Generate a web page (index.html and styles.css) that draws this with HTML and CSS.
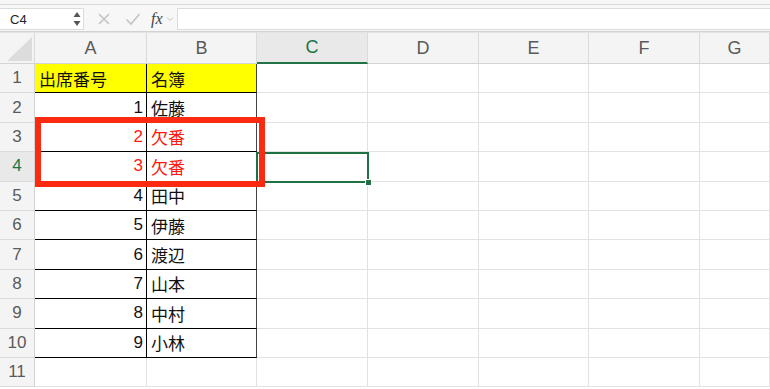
FILE: index.html
```html
<!DOCTYPE html>
<html lang="ja">
<head>
    <meta charset="UTF-8">
    <title>出席番号</title>
    <link rel="stylesheet" href="styles.css">
</head>
<body>
    <div class="top-strip"></div>

    <div class="formula-bar">
        <div class="name-box">
            <span>C4</span>
            <svg class="spinner" width="8" height="16" viewBox="0 0 8 16">
                <path d="M4 1 L7.5 6 L0.5 6 Z" fill="#555"/>
                <path d="M4 15 L7.5 10 L0.5 10 Z" fill="#555"/>
            </svg>
        </div>
        <div class="bar-icons">
            <svg width="14" height="14" viewBox="0 0 14 14">
                <path d="M2 2 L12 12 M12 2 L2 12" stroke="#c4c4c4" stroke-width="1.6" fill="none"/>
            </svg>
            <svg width="16" height="14" viewBox="0 0 16 14">
                <path d="M1.5 7.5 L6 12 L14.5 2" stroke="#c4c4c4" stroke-width="1.6" fill="none"/>
            </svg>
            <span class="fx">fx</span>
            <svg width="8" height="8" viewBox="0 0 8 8">
                <path d="M1 2.5 L4 5.5 L7 2.5" stroke="#c8c8c8" stroke-width="1" fill="none"/>
            </svg>
        </div>
        <div class="formula-input"></div>
    </div>

    <div class="sheet">
        <div class="row head">
            <div class="corner"><div class="tri"></div></div>
            <div class="col-h">A</div>
            <div class="col-h">B</div>
            <div class="col-h active">C</div>
            <div class="col-h">D</div>
            <div class="col-h">E</div>
            <div class="col-h">F</div>
            <div class="col-h">G</div>
        </div>

        <div class="row">
            <div class="row-h">1</div>
            <div class="cell a t yellow">出席番号</div>
            <div class="cell b t yellow">名簿</div>
            <div class="cell"></div><div class="cell"></div><div class="cell"></div><div class="cell"></div><div class="cell"></div>
        </div>
        <div class="row">
            <div class="row-h">2</div>
            <div class="cell a t num">1</div>
            <div class="cell b t">佐藤</div>
            <div class="cell"></div><div class="cell"></div><div class="cell"></div><div class="cell"></div><div class="cell"></div>
        </div>
        <div class="row">
            <div class="row-h">3</div>
            <div class="cell a t num red">2</div>
            <div class="cell b t red">欠番</div>
            <div class="cell"></div><div class="cell"></div><div class="cell"></div><div class="cell"></div><div class="cell"></div>
        </div>
        <div class="row">
            <div class="row-h active">4</div>
            <div class="cell a t num red">3</div>
            <div class="cell b t red">欠番</div>
            <div class="cell"></div><div class="cell"></div><div class="cell"></div><div class="cell"></div><div class="cell"></div>
        </div>
        <div class="row">
            <div class="row-h">5</div>
            <div class="cell a t num">4</div>
            <div class="cell b t">田中</div>
            <div class="cell"></div><div class="cell"></div><div class="cell"></div><div class="cell"></div><div class="cell"></div>
        </div>
        <div class="row">
            <div class="row-h">6</div>
            <div class="cell a t num">5</div>
            <div class="cell b t">伊藤</div>
            <div class="cell"></div><div class="cell"></div><div class="cell"></div><div class="cell"></div><div class="cell"></div>
        </div>
        <div class="row">
            <div class="row-h">7</div>
            <div class="cell a t num">6</div>
            <div class="cell b t">渡辺</div>
            <div class="cell"></div><div class="cell"></div><div class="cell"></div><div class="cell"></div><div class="cell"></div>
        </div>
        <div class="row">
            <div class="row-h">8</div>
            <div class="cell a t num">7</div>
            <div class="cell b t">山本</div>
            <div class="cell"></div><div class="cell"></div><div class="cell"></div><div class="cell"></div><div class="cell"></div>
        </div>
        <div class="row">
            <div class="row-h">9</div>
            <div class="cell a t num">8</div>
            <div class="cell b t">中村</div>
            <div class="cell"></div><div class="cell"></div><div class="cell"></div><div class="cell"></div><div class="cell"></div>
        </div>
        <div class="row">
            <div class="row-h">10</div>
            <div class="cell a t num">9</div>
            <div class="cell b t">小林</div>
            <div class="cell"></div><div class="cell"></div><div class="cell"></div><div class="cell"></div><div class="cell"></div>
        </div>
        <div class="row">
            <div class="row-h">11</div>
            <div class="cell"></div><div class="cell"></div>
            <div class="cell"></div><div class="cell"></div><div class="cell"></div><div class="cell"></div><div class="cell"></div>
        </div>

        <!-- 選択セル C4 -->
        <div class="selection"><div class="handle"></div></div>
        <!-- 欠番の強調枠 -->
        <div class="red-box"></div>
    </div>
</body>
</html>
```

FILE: styles.css
```css
* {
    margin: 0;
    padding: 0;
    box-sizing: border-box;
}

body {
    width: 770px;
    height: 389px;
    overflow: hidden;
    background: #fff;
    font-family: 'Liberation Sans', 'Noto Sans CJK JP', sans-serif;
    color: #111;
}

.top-strip {
    height: 5px;
    background: #f6f6f6;
    border-bottom: 1px solid #d9d9d9;
}

/* 数式バー */
.formula-bar {
    height: 27px;
    display: flex;
    align-items: center;
    background: #f7f7f7;
    border-bottom: 1px solid #d2d2d2;
}

.name-box {
    width: 84px;
    height: 22px;
    margin-top: 2px;
    display: flex;
    align-items: center;
    justify-content: space-between;
    padding: 0 2px 0 10px;
    background: #fff;
    border: 1px solid #dcdcdc;
    border-left: none;
    font-size: 13px;
    color: #222;
}

.spinner {
    display: block;
}

.bar-icons {
    display: flex;
    align-items: center;
    width: 93px;
    height: 22px;
    margin-top: 2px;
}

.bar-icons svg:nth-child(1) {
    margin-left: 13px;
}

.bar-icons svg:nth-child(2) {
    margin-left: 14px;
}

.fx {
    margin-left: 10px;
    font-family: 'Liberation Serif', serif;
    font-style: italic;
    font-size: 16px;
    color: #444;
}

.bar-icons svg:nth-child(4) {
    margin-left: 3px;
}

.formula-input {
    flex: 1;
    height: 22px;
    margin-top: 2px;
    background: #fff;
    border: 1px solid #dcdcdc;
    border-right: none;
}

/* シート */
.sheet {
    position: relative;
    border-top: 1px solid #e4e4e4;
}

.row {
    display: grid;
    grid-template-columns: 35px 112px 110px 111px 111px 110px 111px 1fr;
    height: 29.4px;
}

.row.head {
    height: 31px;
    background: #f4f4f4;
}

.corner,
.col-h {
    border-right: 1px solid #dadada;
    border-bottom: 1px solid #d4d4d4;
}

.corner {
    position: relative;
}

.tri {
    position: absolute;
    right: 2px;
    bottom: 2px;
    width: 0;
    height: 0;
    border-left: 25px solid transparent;
    border-bottom: 24px solid #dcdcdc;
}

.col-h {
    display: flex;
    align-items: center;
    justify-content: center;
    font-size: 18px;
    color: #5a5a5a;
}

.col-h.active {
    color: #217346;
    background: #e9e9e9;
    border-bottom: 2px solid #217346;
}

.row-h {
    display: flex;
    align-items: center;
    justify-content: center;
    background: #f4f4f4;
    border-right: 1px solid #d4d4d4;
    border-bottom: 1px solid #dadada;
    font-size: 17px;
    color: #5a5a5a;
}

.row-h.active {
    color: #217346;
    background: #e9e9e9;
}

.cell {
    display: flex;
    align-items: center;
    padding: 0 3px 0 4px;
    border-right: 1px solid #e2e2e2;
    border-bottom: 1px solid #e2e2e2;
    font-size: 17px;
    white-space: nowrap;
}

.cell.t {
    border-bottom-color: #000;
}

.cell.a {
    border-right-color: #000;
}

.cell.b {
    border-right-color: #444;
}

.num {
    justify-content: flex-end;
}

.yellow {
    background: #ffff00;
}

.red {
    color: #ff1a0e;
}

.selection {
    position: absolute;
    left: 256px;
    top: 119px;
    width: 113px;
    height: 31px;
    border: 2px solid #1f7144;
}

.handle {
    position: absolute;
    right: -5px;
    bottom: -5px;
    width: 7px;
    height: 7px;
    background: #1f7144;
    border: 1px solid #fff;
}

.red-box {
    position: absolute;
    left: 35px;
    top: 84px;
    width: 230px;
    height: 70px;
    border: 6px solid #fb2a10;
}
```
